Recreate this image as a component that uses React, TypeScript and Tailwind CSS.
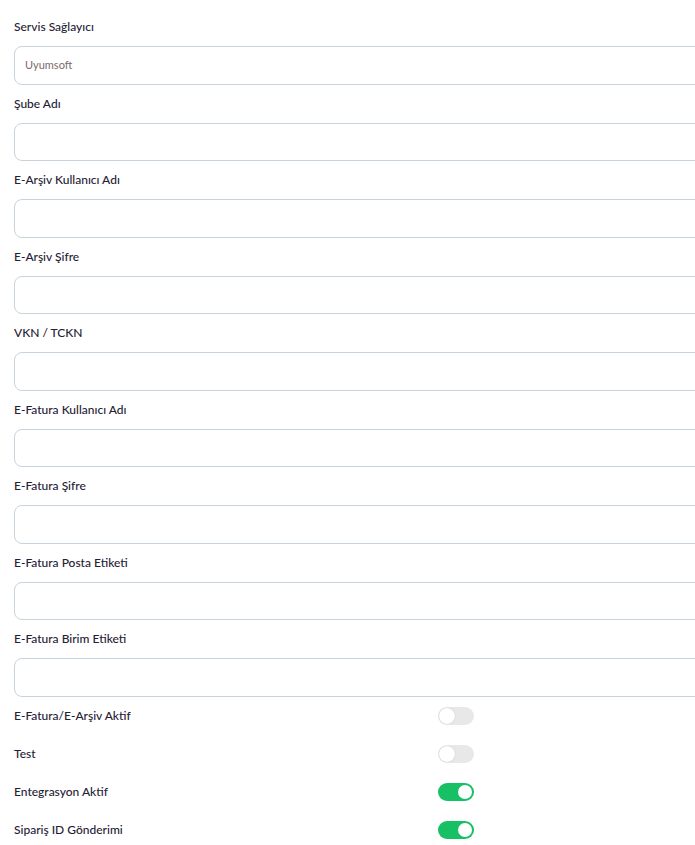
import React from "react";

const fields: { label: string; value?: string }[] = [
  { label: "Servis Sağlayıcı", value: "Uyumsoft" },
  { label: "Şube Adı" },
  { label: "E-Arşiv Kullanıcı Adı" },
  { label: "E-Arşiv Şifre" },
  { label: "VKN / TCKN" },
  { label: "E-Fatura Kullanıcı Adı" },
  { label: "E-Fatura Şifre" },
  { label: "E-Fatura Posta Etiketi" },
  { label: "E-Fatura Birim Etiketi" },
];

const toggles: { label: string; on: boolean }[] = [
  { label: "E-Fatura/E-Arşiv Aktif", on: false },
  { label: "Test", on: false },
  { label: "Entegrasyon Aktif", on: true },
  { label: "Sipariş ID Gönderimi", on: true },
];

function Toggle({ on }: { on: boolean }) {
  return (
    <div
      className={
        on
          ? "w-[36px] h-[18px] rounded-full bg-[#17bf65] flex items-center justify-end px-[2px]"
          : "w-[36px] h-[18px] rounded-full bg-[#e8e8e8] flex items-center justify-start px-[1px]"
      }
    >
      <div
        className={
          on
            ? "w-[14px] h-[14px] rounded-full bg-white"
            : "w-[16px] h-[16px] rounded-full bg-white shadow-[0_0_1px_rgba(0,0,0,0.25)]"
        }
      />
    </div>
  );
}

export default function App() {
  return (
    <div
      className="w-[695px] h-[845px] overflow-hidden bg-white pl-[14px] pt-[18px]"
      style={{ fontFamily: "Lato, 'Noto Sans', sans-serif" }}
    >
      <div className="flex flex-col gap-[10px]">
        {fields.map((f) => (
          <div key={f.label} className="flex flex-col">
            <label className="text-[12px] leading-[18px] font-medium text-[#1f2134]">
              {f.label}
            </label>
            <div className="mt-[10px] w-[740px] h-[38.5px] rounded-[8px] border border-[#c9d3dc] flex items-center pl-[10px]">
              {f.value ? (
                <span className="text-[11px] text-[#7a6a6d]">{f.value}</span>
              ) : null}
            </div>
          </div>
        ))}
      </div>
      <div className="flex flex-col">
        {toggles.map((t) => (
          <div key={t.label} className="h-[38px] flex items-center">
            <span className="w-[424px] text-[12px] leading-[18px] font-medium text-[#1f2134]">
              {t.label}
            </span>
            <Toggle on={t.on} />
          </div>
        ))}
      </div>
    </div>
  );
}
